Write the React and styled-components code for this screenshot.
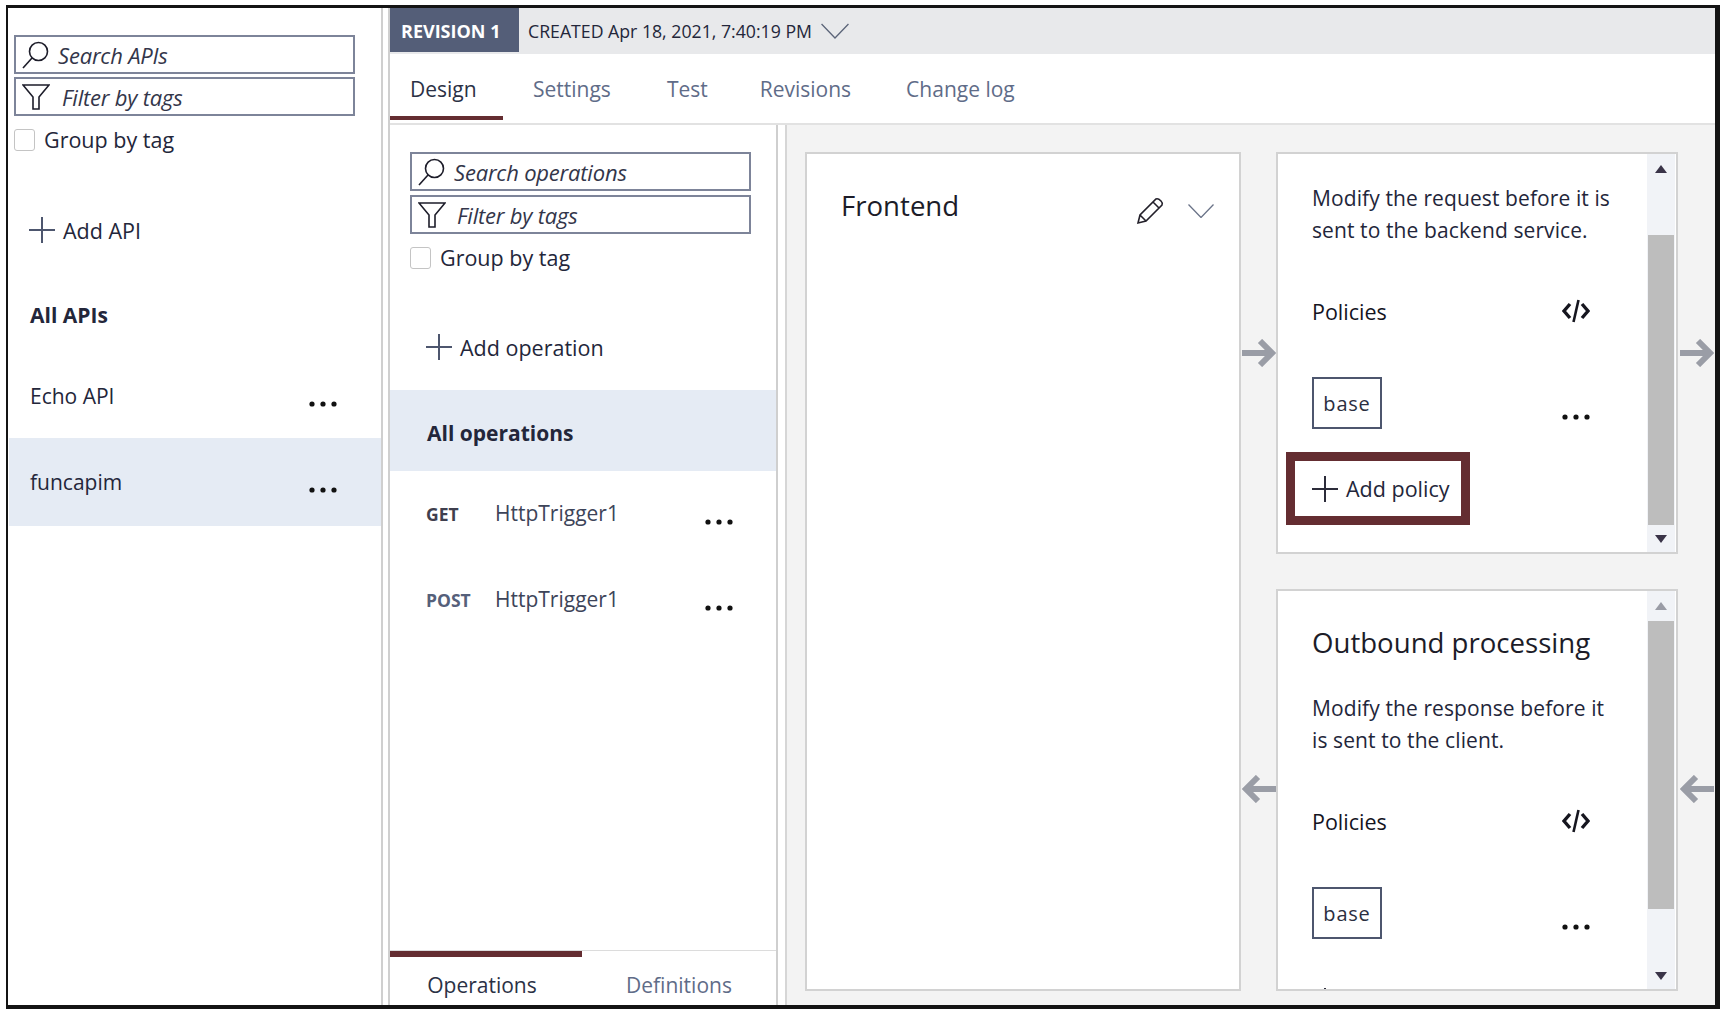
import React from 'react';
import styled, { createGlobalStyle } from 'styled-components';

const FONT = '"Open Sans", "Noto Sans", sans-serif';
const INK = '#23263a';
const MAROON = '#642d31';

const GlobalStyle = createGlobalStyle`
  html, body {
    margin: 0;
    padding: 0;
    background: #fff;
    font-family: ${FONT};
    color: ${INK};
  }
  * { box-sizing: border-box; }
`;

const Frame = styled.div`
  display: flex;
  width: 1714px;
  height: 1004px;
  margin: 5px 0 0 6px;
  border: solid #141414;
  border-width: 3px 5px 4px 2px;
  background: #fff;
  overflow: hidden;
`;

const Sidebar = styled.aside`
  flex: 0 0 375px;
  padding-top: 27px;
  border-right: 2px solid #cfcfcf;
`;

const Main = styled.main`
  flex: 1;
  display: flex;
  flex-direction: column;
  min-width: 0;
  margin-left: 5px;
  border-left: 2px solid #cfcfcf;
`;

const RevisionBar = styled.div`
  display: flex;
  align-items: center;
  flex: 0 0 46px;
  background: #e8e9eb;
  font-size: 17.7px;
`;

const RevisionBadge = styled.div`
  display: flex;
  align-items: center;
  align-self: stretch;
  width: 129px;
  padding: 2px 0 0 11px;
  margin-bottom: 2px;
  background: #545e78;
  color: #fff;
  font-weight: 700;
  font-size: 18px;
`;

const Created = styled.span`
  margin-left: 9px;
`;

const CreatedChevron = styled.svg`
  width: 28px;
  height: 16px;
  margin-left: 9px;
  fill: none;
  stroke: #5b6478;
  stroke-width: 1.2;
`;

const TabBar = styled.nav`
  display: flex;
  flex: 0 0 71px;
  border-bottom: 2px solid #e2e2e2;
`;

const Tab = styled.div`
  display: flex;
  align-items: center;
  height: 66px;
  width: ${(p) => (p.$active ? '113px' : 'auto')};
  margin-right: ${(p) => p.$gap}px;
  padding: 8px 0 0 ${(p) => (p.$active ? 20 : 0)}px;
  border-bottom: ${(p) => (p.$active ? `4px solid ${MAROON}` : '4px solid transparent')};
  color: ${(p) => (p.$active ? '#2b3145' : '#5f6c88')};
  font-size: 21px;
`;

const Content = styled.div`
  flex: 1;
  display: flex;
  min-height: 0;
`;

const OpsPanel = styled.section`
  flex: 0 0 388px;
  display: flex;
  flex-direction: column;
  padding-top: 27px;
  border-right: 2px solid #cfcfcf;
`;

const Canvas = styled.section`
  flex: 1;
  display: grid;
  grid-template-columns: 436px 35px 402px 37px;
  grid-template-rows: 402px 402px;
  row-gap: 35px;
  align-content: start;
  margin-left: 7px;
  padding: 27px 0 0 18px;
  border-left: 2px solid #d6d6d6;
  background: #f3f3f3;
`;

const Field = styled.div`
  display: flex;
  align-items: center;
  width: 341px;
  height: 39px;
  margin: 0 0 ${(p) => p.$mb || 0}px ${(p) => p.$inset}px;
  border: 2px solid #7d8499;
  background: #fff;
  font-style: italic;
  font-size: 22px;
  letter-spacing: -0.2px;
  color: #33364a;
`;

const FieldIcon = styled.svg`
  flex: 0 0 auto;
  width: 28px;
  height: 28px;
  margin: 0 ${(p) => p.$after}px 0 6px;
  fill: none;
  stroke: #1d1d2a;
  stroke-width: 1.6;
`;

const GroupRow = styled.label`
  display: flex;
  align-items: center;
  gap: 9px;
  height: 27px;
  margin: 10px 0 0 ${(p) => p.$inset}px;
  font-size: 21.5px;
`;

const Check = styled.span`
  width: 21px;
  height: 22px;
  border: 1px solid #c4c4c4;
  border-radius: 3px;
`;

const AddRow = styled.div`
  display: flex;
  align-items: center;
  gap: 8px;
  height: 26px;
  margin: ${(p) => p.$mt}px 0 0 ${(p) => p.$inset}px;
  font-size: 21.5px;
`;

const PlusIcon = styled.svg`
  flex: 0 0 26px;
  width: 26px;
  height: 26px;
  stroke: ${(p) => p.$color || '#4d566e'};
  stroke-width: 2;
`;

const ListRow = styled.div`
  display: flex;
  align-items: center;
  height: ${(p) => p.$h}px;
  margin-top: ${(p) => p.$mt || 0}px;
  margin-left: ${(p) => p.$ml || 0}px;
  padding-left: ${(p) => p.$pad}px;
  background: ${(p) => (p.$selected ? '#e5ebf4' : 'transparent')};
  font-size: 21px;
  font-weight: ${(p) => (p.$bold ? 700 : 400)};
`;

const RowLabel = styled.span`
  flex: 1;
  color: ${(p) => p.$color || INK};
  font-weight: inherit;
  margin-top: ${(p) => p.$shift || 0}px;
`;

const Verb = styled.span`
  flex: 0 0 69px;
  font-weight: 700;
  font-size: 17.5px;
  color: ${(p) => p.$color};
  margin-top: -1px;
`;

const Dots = styled.svg`
  flex: 0 0 28px;
  width: 28px;
  height: 6px;
  fill: #111;
  margin: ${(p) => p.$mt ?? 16}px ${(p) => p.$mr || 0}px ${(p) => p.$mb || 0}px 0;
`;

const SideTabs = styled.div`
  display: flex;
  margin-top: auto;
  height: 55px;
  border-top: 1px solid #dcdcdc;
`;

const SideTab = styled.div`
  flex: ${(p) => (p.$active ? '0 0 192px' : 1)};
  display: flex;
  align-items: center;
  justify-content: center;
  padding: 7px ${(p) => (p.$active ? 8 : 0)}px 0 0;
  border-top: 6px solid ${(p) => (p.$active ? MAROON : 'transparent')};
  color: ${(p) => (p.$active ? '#2b3145' : '#5f6c88')};
  font-size: 21px;
`;

const Card = styled.article`
  display: flex;
  border: 2px solid #d2d2d2;
  background: #fff;
  overflow: hidden;
  grid-row: ${(p) => p.$row};
  grid-column: ${(p) => p.$col};
`;

const FrontendHead = styled.header`
  display: flex;
  align-items: flex-start;
  width: 100%;
  height: 60px;
  padding: 31px 25px 0 34px;
`;

const FrontendTitle = styled.h2`
  flex: 1;
  margin: 0;
  font-size: 27.6px;
  line-height: 40px;
  font-weight: 400;
  color: #1c1c28;
`;

const Pencil = styled.svg`
  width: 28px;
  height: 28px;
  margin-top: 12px;
  fill: none;
  stroke: #23202a;
  stroke-width: 1.6;
`;

const HeadChevron = styled.svg`
  width: 26px;
  height: 14px;
  margin: 19px 0 0 24px;
  fill: none;
  stroke: #6a7388;
  stroke-width: 1.3;
`;

const CardBody = styled.div`
  flex: 1;
  min-width: 0;
  padding: ${(p) => p.$top}px 0 0 34px;
`;

const Heading = styled.h3`
  margin: 0 0 30px;
  font-size: 27.6px;
  line-height: 40px;
  font-weight: 400;
  color: #1c1c28;
`;

const Blurb = styled.p`
  margin: 0;
  font-size: 21px;
  line-height: 32px;
  letter-spacing: 0.1px;
  white-space: nowrap;
`;

const PolicyHead = styled.div`
  display: flex;
  align-items: center;
  justify-content: space-between;
  width: 278px;
  height: 30px;
  margin-top: 50px;
  font-size: 21.5px;
  font-weight: 500;
  color: #14141e;
`;

const CodeIcon = styled.svg`
  width: 28px;
  height: 24px;
  fill: none;
  stroke: #16161f;
  stroke-width: 3.4;
`;

const BaseRow = styled.div`
  display: flex;
  justify-content: space-between;
  align-items: flex-end;
  width: 278px;
  margin-top: 51px;
`;

const BaseChip = styled.div`
  display: flex;
  align-items: center;
  justify-content: center;
  width: 70px;
  height: 52px;
  border: 2px solid #4d566e;
  font-size: 20px;
  letter-spacing: 0.8px;
  color: #2b2e40;
`;

const AddPolicy = styled.div`
  display: inline-flex;
  align-items: center;
  gap: 8px;
  font-size: 21.5px;
  margin-top: ${(p) => (p.$marked ? 23 : 47)}px;
  ${(p) => (p.$marked
    ? `width: 184px;
       height: 73px;
       margin-left: -26px;
       padding-left: 17px;
       border: 9px solid ${MAROON};`
    : '')}
`;

const ScrollBar = styled.div`
  flex: 0 0 28px;
  display: flex;
  flex-direction: column;
  margin-right: 1px;
  background: #f1f3f7;
`;

const ScrollEnd = styled.div`
  display: flex;
  flex: 0 0 ${(p) => (p.$down ? 27 : 30)}px;
  align-items: center;
  justify-content: center;
  &::before {
    content: '';
    border-left: 6px solid transparent;
    border-right: 6px solid transparent;
    ${(p) => (p.$down ? 'border-top' : 'border-bottom')}: 8px solid ${(p) => (p.$dim ? '#9a9ca6' : '#3a3448')};
  }
`;

const Track = styled.div`
  flex: 1;
  min-height: 0;
`;

const Thumb = styled.div`
  margin: ${(p) => p.$offset}px 1px 0;
  height: ${(p) => p.$height}px;
  background: #bdbdbd;
`;

const ArrowCell = styled.div`
  display: flex;
  align-items: center;
  justify-content: center;
  grid-row: ${(p) => p.$row};
  grid-column: ${(p) => p.$col};
  padding-bottom: ${(p) => (p.$row === '2' ? 3 : 0)}px;
`;

const FlowArrow = styled.svg`
  width: 34px;
  height: 28px;
  fill: none;
  stroke: #9a9da6;
  stroke-width: 6;
  transform: ${(p) => (p.$back ? 'scaleX(-1)' : 'none')};
`;

const SearchGlyph = ({ after }) => (
  <FieldIcon $after={after} viewBox="0 0 28 28">
    <circle cx="16.5" cy="10.5" r="9" />
    <path d="M10 17 L1 27" />
  </FieldIcon>
);

const FilterGlyph = ({ after }) => (
  <FieldIcon $after={after} viewBox="0 0 28 28">
    <path d="M1 2 H27 L17 14 V26 H11 V14 Z" />
  </FieldIcon>
);

const Plus = ({ color }) => (
  <PlusIcon $color={color} viewBox="0 0 26 26">
    <path d="M0 13 H26 M13 0 V26" />
  </PlusIcon>
);

const More = ({ mt, mr, mb }) => (
  <Dots $mt={mt} $mr={mr} $mb={mb} viewBox="0 0 28 6">
    <circle cx="3" cy="3" r="2.6" />
    <circle cx="14" cy="3" r="2.6" />
    <circle cx="25" cy="3" r="2.6" />
  </Dots>
);

const Chevron = ({ as: Icon }) => (
  <Icon viewBox="0 0 26 14">
    <path d="M0.5 0.5 L13 13.5 L25.5 0.5" />
  </Icon>
);

const Code = () => (
  <CodeIcon viewBox="0 0 28 24">
    <path d="M8 5 L2 12 L8 19 M20 5 L26 12 L20 19" />
    <path d="M16.5 1 L11.5 23" strokeWidth="2.6" />
  </CodeIcon>
);

const Policies = ({ children }) => (
  <>
    <PolicyHead>Policies<Code /></PolicyHead>
    <BaseRow>
      <BaseChip>base</BaseChip>
      <More mt={0} mb={9} />
    </BaseRow>
    {children}
  </>
);

const Arrow = ({ row, col, back }) => (
  <ArrowCell $row={row} $col={col}>
    <FlowArrow $back={back} viewBox="0 0 34 28">
      <path d="M0 14 H30 M18 2 L30 14 L18 26" />
    </FlowArrow>
  </ArrowCell>
);

const App = () => (
  <>
    <GlobalStyle />
    <Frame>
      <Sidebar>
        <Field $inset={6} $mb={3}><SearchGlyph after={8} />Search APIs</Field>
        <Field $inset={6}><FilterGlyph after={12} />Filter by tags</Field>
        <GroupRow $inset={6}><Check />Group by tag</GroupRow>
        <AddRow $inset={21} $mt={64}><Plus />Add API</AddRow>
        <ListRow $h={78} $mt={33} $pad={22} $bold><RowLabel>All APIs</RowLabel></ListRow>
        <ListRow $h={84} $pad={22}><RowLabel $shift={-1}>Echo API</RowLabel><More mr={44} /></ListRow>
        <ListRow $h={88} $pad={21} $ml={1} $selected><RowLabel $shift={-1}>funcapim</RowLabel><More mr={44} /></ListRow>
      </Sidebar>
      <Main>
        <RevisionBar>
          <RevisionBadge>REVISION 1</RevisionBadge>
          <Created>CREATED Apr 18, 2021, 7:40:19 PM</Created>
          <Chevron as={CreatedChevron} />
        </RevisionBar>
        <TabBar>
          <Tab $active $gap={30}>Design</Tab>
          <Tab $gap={56}>Settings</Tab>
          <Tab $gap={52}>Test</Tab>
          <Tab $gap={55}>Revisions</Tab>
          <Tab $gap={0}>Change log</Tab>
        </TabBar>
        <Content>
          <OpsPanel>
            <Field $inset={20} $mb={4}><SearchGlyph after={8} />Search operations</Field>
            <Field $inset={20}><FilterGlyph after={11} />Filter by tags</Field>
            <GroupRow $inset={20}><Check />Group by tag</GroupRow>
            <AddRow $inset={36} $mt={63}><Plus />Add operation</AddRow>
            <ListRow $h={81} $mt={30} $pad={37} $selected $bold><RowLabel $shift={5}>All operations</RowLabel></ListRow>
            <ListRow $h={86} $pad={36}>
              <Verb $color="#3f3f4e">GET</Verb><RowLabel $color="#3d4459" $shift={-3}>HttpTrigger1</RowLabel><More mr={43} />
            </ListRow>
            <ListRow $h={86} $pad={36}>
              <Verb $color="#55607a">POST</Verb><RowLabel $color="#3d4459" $shift={-3}>HttpTrigger1</RowLabel><More mr={43} />
            </ListRow>
            <SideTabs>
              <SideTab $active>Operations</SideTab>
              <SideTab>Definitions</SideTab>
            </SideTabs>
          </OpsPanel>
          <Canvas>
            <Card $row="1 / 3" $col="1">
              <FrontendHead>
                <FrontendTitle>Frontend</FrontendTitle>
                <Pencil viewBox="0 0 28 28">
                  <path d="M2 26 L4 18 L20 2 Q22 1 25 4 Q27 6 26 8 L10 24 Z M4 18 L10 24 M17 5 L23 11" />
                </Pencil>
                <Chevron as={HeadChevron} />
              </FrontendHead>
            </Card>
            <Arrow row="1" col="2" />
            <Card $row="1" $col="3">
              <CardBody $top={28}>
                <Blurb>Modify the request before it is<br />sent to the backend service.</Blurb>
                <Policies>
                  <AddPolicy $marked><Plus color="#2c2c3a" />Add policy</AddPolicy>
                </Policies>
              </CardBody>
              <ScrollBar>
                <ScrollEnd />
                <Track><Thumb $offset={51} $height={290} /></Track>
                <ScrollEnd $down />
              </ScrollBar>
            </Card>
            <Arrow row="1" col="4" />
            <Arrow row="2" col="2" back />
            <Card $row="2" $col="3">
              <CardBody $top={31}>
                <Heading>Outbound processing</Heading>
                <Blurb>Modify the response before it<br />is sent to the client.</Blurb>
                <Policies>
                  <AddPolicy><Plus color="#2c2c3a" />Add policy</AddPolicy>
                </Policies>
              </CardBody>
              <ScrollBar>
                <ScrollEnd $dim />
                <Track><Thumb $offset={0} $height={288} /></Track>
                <ScrollEnd $down />
              </ScrollBar>
            </Card>
            <Arrow row="2" col="4" back />
          </Canvas>
        </Content>
      </Main>
    </Frame>
  </>
);

export default App;
